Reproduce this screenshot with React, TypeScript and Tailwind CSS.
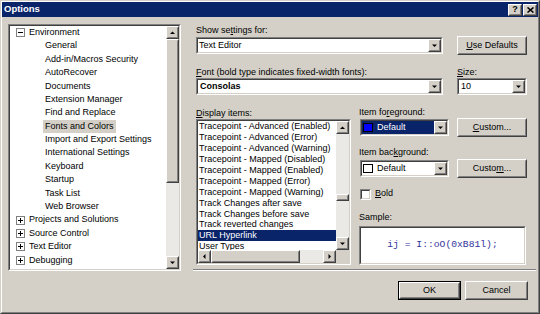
import React from 'react'

// classic win2000 bevels
const sunkenOuter = 'border border-t-[#808080] border-l-[#808080] border-b-white border-r-white'
const sunkenInner = 'border border-t-[#404040] border-l-[#404040] border-b-[#d4d0c8] border-r-[#d4d0c8]'
const raisedOuter = 'border border-t-white border-l-white border-b-[#404040] border-r-[#404040]'
const raisedInner = 'border border-t-[#d4d0c8] border-l-[#d4d0c8] border-b-[#808080] border-r-[#808080]'

type BoxProps = { className?: string; inner?: string; children?: React.ReactNode }

function Sunken({ className = '', inner = '', children }: BoxProps) {
  return (
    <div className={`${sunkenOuter} ${className}`}>
      <div className={`h-full w-full ${sunkenInner} ${inner}`}>{children}</div>
    </div>
  )
}

function Raised({ className = '', inner = '', children }: BoxProps) {
  return (
    <div className={`${raisedOuter} ${className}`}>
      <div className={`h-full w-full bg-[#d4d0c8] ${raisedInner} ${inner}`}>{children}</div>
    </div>
  )
}

function Arrow({ dir }: { dir: 'up' | 'down' | 'left' | 'right' }) {
  const pts = {
    up: '1,5 3.5,2.5 6,5',
    down: '1,2.5 3.5,5 6,2.5',
    left: '4.5,1 2,3.5 4.5,6',
    right: '2.5,1 5,3.5 2.5,6',
  }[dir]
  return (
    <svg width="7" height="7" viewBox="0 0 7 7">
      <polygon points={pts} fill="#000" />
    </svg>
  )
}

function ScrollBtn({ dir }: { dir: 'up' | 'down' | 'left' | 'right' }) {
  return (
    <Raised className="w-[13px] h-[13px] shrink-0" inner="flex items-center justify-center">
      <Arrow dir={dir} />
    </Raised>
  )
}

function Combo({ className = '', field = '', children }: { className?: string; field?: string; children?: React.ReactNode }) {
  return (
    <Sunken className={`h-[17px] ${className}`} inner="flex bg-white">
      <div className={`flex-1 flex items-center overflow-hidden whitespace-nowrap ${field}`}>{children}</div>
      <Raised className="w-[13px] h-full shrink-0" inner="flex items-center justify-center">
        <Arrow dir="down" />
      </Raised>
    </Sunken>
  )
}

function Button({ className = '', children, isDefault }: { className?: string; children: React.ReactNode; isDefault?: boolean }) {
  const btn = (
    <Raised className={isDefault ? 'h-full w-full' : `h-[19px] ${className}`} inner="flex items-center justify-center">
      {children}
    </Raised>
  )
  if (!isDefault) return btn
  return <div className={`h-[19px] border border-black ${className}`}>{btn}</div>
}

function Expander({ open }: { open: boolean }) {
  return (
    <div className="w-[9px] h-[9px] border border-[#808080] bg-white flex items-center justify-center shrink-0">
      <svg width="5" height="5" viewBox="0 0 5 5" shapeRendering="crispEdges">
        <line x1="0" y1="2.5" x2="5" y2="2.5" stroke="#000" strokeWidth="1" />
        {!open && <line x1="2.5" y1="0" x2="2.5" y2="5" stroke="#000" strokeWidth="1" />}
      </svg>
    </div>
  )
}

const envChildren = [
  'General',
  'Add-in/Macros Security',
  'AutoRecover',
  'Documents',
  'Extension Manager',
  'Find and Replace',
  'Fonts and Colors',
  'Import and Export Settings',
  'International Settings',
  'Keyboard',
  'Startup',
  'Task List',
  'Web Browser',
]

const topLevel = ['Projects and Solutions', 'Source Control', 'Text Editor', 'Debugging']

const displayItems = [
  'Tracepoint - Advanced (Enabled)',
  'Tracepoint - Advanced (Error)',
  'Tracepoint - Advanced (Warning)',
  'Tracepoint - Mapped (Disabled)',
  'Tracepoint - Mapped (Enabled)',
  'Tracepoint - Mapped (Error)',
  'Tracepoint - Mapped (Warning)',
  'Track Changes after save',
  'Track Changes before save',
  'Track reverted changes',
  'URL Hyperlink',
  'User Types',
]

function Tree() {
  return (
    <Sunken className="w-[173px] h-[247px] shrink-0" inner="flex bg-white">
      <div className="flex-1 overflow-hidden">
        <div className="h-[13.4px] flex items-center pl-[6px] gap-[4px]">
          <Expander open />
          <span>Environment</span>
        </div>
        {envChildren.map((c) => (
          <div key={c} className="h-[13.4px] flex items-center pl-[33px] whitespace-nowrap">
            <span className={`px-[2px] ${c === 'Fonts and Colors' ? 'bg-[#d4d0c8]' : ''}`}>{c}</span>
          </div>
        ))}
        {topLevel.map((c) => (
          <div key={c} className="h-[13.4px] flex items-center pl-[6px] gap-[4px] whitespace-nowrap">
            <Expander open={false} />
            <span>{c}</span>
          </div>
        ))}
      </div>
      <div className="w-[13px] flex flex-col">
        <ScrollBtn dir="up" />
        <Raised className="h-[144px]" />
        <div className="flex-1 bg-[#ebe9e5]" />
        <ScrollBtn dir="down" />
      </div>
    </Sunken>
  )
}

function DisplayList() {
  return (
    <Sunken className="w-[155px] h-[146px]" inner="flex flex-col bg-white">
      <div className="flex flex-1 min-h-0">
        <div className="flex-1 overflow-hidden">
          {displayItems.map((d) => (
            <div
              key={d}
              className={`h-[10.94px] leading-[10.94px] pl-[1px] whitespace-nowrap ${
                d === 'URL Hyperlink' ? 'bg-[#0a246a] text-white' : ''
              }`}
            >
              {d}
            </div>
          ))}
        </div>
        <div className="w-[13px] flex flex-col">
          <ScrollBtn dir="up" />
          <div className="h-[60px] bg-[#ebe9e5]" />
          <Raised className="h-[7px]" />
          <div className="flex-1 bg-[#ebe9e5]" />
          <ScrollBtn dir="down" />
        </div>
      </div>
      <div className="flex h-[13px]">
        <ScrollBtn dir="left" />
        <Raised className="w-[89px] h-[13px]" />
        <div className="flex-1 bg-[#ebe9e5]" />
        <ScrollBtn dir="right" />
        <div className="w-[13px] bg-[#d4d0c8]" />
      </div>
    </Sunken>
  )
}

export default function App() {
  return (
    <div className="w-[540px] h-[314px] border border-t-[#d4d0c8] border-l-[#d4d0c8] border-b-[#404040] border-r-[#404040] font-['Liberation_Sans',Arial,sans-serif] text-[9px] text-black">
      <div className="h-full w-full border border-t-white border-l-white border-b-[#808080] border-r-[#808080] bg-[#d4d0c8] flex flex-col">
        {/* title bar */}
        <div className="h-[15px] bg-[#0a246a] flex items-center pl-[2px] pr-[1px]">
          <span className="text-white font-bold text-[9.5px]">Options</span>
          <div className="ml-auto flex gap-[1px]">
            <Raised className="w-[14px] h-[12px]" inner="flex items-center justify-center">
              <span className="font-bold text-[9px] leading-none">?</span>
            </Raised>
            <Raised className="w-[14px] h-[12px]" inner="flex items-center justify-center">
              <svg width="7" height="6" viewBox="0 0 7 6">
                <path d="M0.5 0.5 L6.5 5.5 M6.5 0.5 L0.5 5.5" stroke="#000" strokeWidth="1.6" />
              </svg>
            </Raised>
          </div>
        </div>

        <div className="flex-1 flex pl-[6px] pt-[7px]">
          <Tree />

          <div className="ml-[15px] w-[331px] flex flex-col">
            {/* show settings for */}
            <div className="flex items-end">
              <div className="w-[247px] flex flex-col">
                <div className="h-[13px] leading-[13px]">
                  Show se<u>t</u>tings for:
                </div>
                <Combo field="pl-[1px]">Text Editor</Combo>
              </div>
              <Button className="ml-[14px] w-[70px] mb-[-1px]">
                <span>
                  <u>U</u>se Defaults
                </span>
              </Button>
            </div>

            {/* font / size */}
            <div className="flex mt-[13px]">
              <div className="w-[247px] flex flex-col">
                <div className="h-[11px] leading-[11px] whitespace-nowrap">
                  <u>F</u>ont (bold type indicates fixed-width fonts):
                </div>
                <Combo field="pl-[2px] font-bold">Consolas</Combo>
              </div>
              <div className="ml-[14px] w-[70px] flex flex-col">
                <div className="h-[11px] leading-[11px]">
                  <u>S</u>ize:
                </div>
                <Combo field="pl-[2px]">10</Combo>
              </div>
            </div>

            {/* display items + colours */}
            <div className="flex mt-[12px]">
              <div className="w-[155px] flex flex-col">
                <div className="h-[11px] leading-[11px] mt-[1px]">
                  <u>D</u>isplay items:
                </div>
                <DisplayList />
              </div>

              <div className="ml-[8px] w-[168px] flex flex-col">
                <div className="h-[11px] leading-[11px]">
                  Item fo<u>r</u>eground:
                </div>
                <div className="h-[19px] flex items-center">
                  <Combo className="ml-[1px] w-[89px]" field="bg-[#0a246a] text-white pl-[1px] gap-[4px]">
                    <span className="w-[10px] h-[9px] bg-[#0000ff] border border-black shrink-0" />
                    <span>Default</span>
                  </Combo>
                  <Button className="ml-auto w-[70px]">
                    <span>
                      <u>C</u>ustom...
                    </span>
                  </Button>
                </div>

                <div className="h-[11px] leading-[11px] mt-[10px]">
                  Item bac<u>k</u>ground:
                </div>
                <div className="h-[19px] mt-[1px] flex items-center">
                  <Combo className="ml-[1px] w-[89px]" field="pl-[1px] gap-[4px]">
                    <span className="w-[10px] h-[9px] bg-white border border-black shrink-0" />
                    <span>Default</span>
                  </Combo>
                  <Button className="ml-auto w-[70px]">
                    <span>
                      Custo<u>m</u>...
                    </span>
                  </Button>
                </div>

                <div className="h-[12px] mt-[10px] flex items-center gap-[4px] pl-[1px]">
                  <Sunken className="w-[11px] h-[11px]" inner="bg-white" />
                  <span>
                    <u>B</u>old
                  </span>
                </div>

                <div className="h-[11px] leading-[11px] mt-[12px]">Sample:</div>
                <Sunken className="mt-[3px] w-[167px] h-[39px]" inner="bg-white flex items-center justify-center">
                  <span className="font-['Liberation_Mono',monospace] text-[9.7px] text-[#34349c] whitespace-pre">
                    ij = I::oO(0xB81l);
                  </span>
                </Sunken>
              </div>
            </div>

            {/* separator */}
            <div className="mt-[4px] -ml-[3px] w-[343px] h-[2px] border-t border-t-[#808080] border-b border-b-white" />

            {/* dialog buttons */}
            <div className="mt-[10px] flex justify-end gap-[4px] -mr-[1px]">
              <Button className="w-[63px]" isDefault>
                OK
              </Button>
              <Button className="w-[63px]">Cancel</Button>
            </div>
          </div>
        </div>
      </div>
    </div>
  )
}
